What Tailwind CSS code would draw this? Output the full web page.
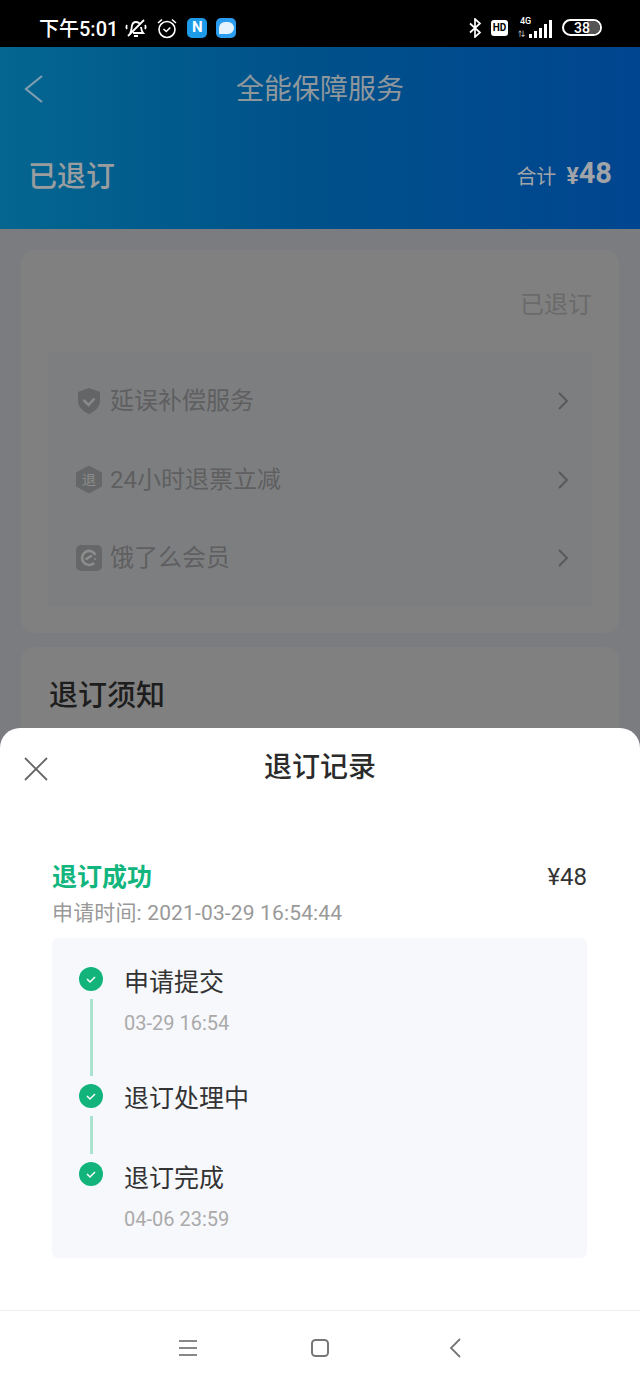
<!DOCTYPE html>
<html lang="zh-CN">
<head>
  <meta charset="UTF-8" />
  <title>全能保障服务</title>
  <script src="https://cdn.jsdelivr.net/npm/@tailwindcss/browser@4"></script>
</head>
<body class="bg-white font-['Roboto','Noto_Sans_CJK_SC',sans-serif]">
  <div class="w-[640px] h-[1387px] flex flex-col overflow-hidden">

    <!-- Status bar -->
    <div class="h-[47px] shrink-0 bg-black text-white flex items-center pl-[39px] pr-[38px] pt-[15px] pb-[7px]">
      <span class="text-[20px] leading-none mt-[2px] font-medium">下午5:01</span>
      <svg class="w-[22px] h-[22px] ml-[7px]" viewBox="0 0 22 22" fill="none" stroke="#fff" stroke-width="1.800">
        <path d="M5 16c1.500-2 1.500-4 1.800-6.500C7.200 6.500 9 5 11 5s3.500 1 4.200 3M16 10c.3 2.500.5 4.500 2 6H8M9 19h4M19 3 3 19M2 8c-.6 1-.6 3 0 4M20 8c.6 1 .6 3 0 4" />
      </svg>
      <svg class="w-[22px] h-[22px] ml-[9px]" viewBox="0 0 22 22" fill="none" stroke="#fff" stroke-width="1.600">
        <circle cx="11" cy="12.500" r="8" />
        <path d="M7.500 12l2.800 2.500 4-4M2 6l4-3.500M20 6l-4-3.500" />
      </svg>
      <div class="w-[20px] h-[20px] ml-[9px] rounded-[5px] bg-[#1d9be8] flex items-center justify-center text-[15px] font-bold leading-none">N</div>
      <div class="w-[20px] h-[20px] ml-[9px] rounded-[5px] bg-[#2a9df0] flex items-center justify-center">
        <div class="w-[15px] h-[12px] bg-[#e4f3fd] rounded-[7px_7px_7px_1px]"></div>
      </div>
      <div class="ml-auto flex items-center">
        <svg class="w-[14px] h-[20px]" viewBox="0 0 14 20" fill="none" stroke="#fff" stroke-width="1.700">
          <path d="M2 5.500l10 9-5 4.500V1l5 4.500-10 9" />
        </svg>
        <div class="w-[17px] h-[16px] ml-[9px] rounded-[3px] bg-white text-black text-[10px] font-bold leading-[16px] text-center">HD</div>
        <div class="w-[34px] h-[20px] ml-[10px] relative">
          <span class="absolute left-[2px] top-[-2px] text-[9px] font-medium leading-[10px]">4G</span>
          <span class="absolute left-0 bottom-0 text-[7px] leading-[8px]">⇅</span>
          <div class="absolute right-0 bottom-0 flex items-end gap-[2px]">
            <div class="w-[3px] h-[4px] bg-white"></div>
            <div class="w-[3px] h-[7px] bg-white"></div>
            <div class="w-[3px] h-[10px] bg-white"></div>
            <div class="w-[3px] h-[14px] bg-white"></div>
            <div class="w-[3px] h-[18px] bg-white"></div>
          </div>
        </div>
        <div class="w-[40px] h-[17px] ml-[10px] rounded-full border-2 border-white relative overflow-hidden flex items-center justify-center">
          <div class="absolute right-0 top-0 bottom-0 w-[13px] bg-[#555]"></div>
          <span class="relative text-[14px] font-medium leading-none">38</span>
        </div>
      </div>
    </div>

    <!-- Dimmed header -->
    <div class="h-[182px] shrink-0 bg-gradient-to-r from-[#056690] via-[#00508a] to-[#004590] text-[#8f979c]">
      <div class="h-[82px] flex items-center relative">
        <svg class="ml-[24px] mt-[1px] w-[20px] h-[30px]" viewBox="0 0 20 30" fill="none" stroke="#7d9db0" stroke-width="2.200">
          <path d="M18 2 2 15l16 13" />
        </svg>
        <div class="absolute inset-x-0 text-center text-[28px] leading-none mt-[4px]">全能保障服务</div>
      </div>
      <div class="h-[96px] flex items-center justify-between pl-[28px] pr-[28px]">
        <span class="text-[29px] font-medium leading-none text-[#9a9d9f]">已退订</span>
        <div class="flex items-center text-[#a0a4a8]">
          <span class="text-[20px] leading-none">合计</span>
          <span class="text-[23px] font-bold leading-none ml-[10px] -mt-[1px]">¥</span>
          <span class="text-[29px] font-bold leading-none -mt-[7px]">48</span>
        </div>
      </div>
    </div>

    <!-- Dimmed page under the sheet -->
    <div class="h-[519px] shrink-0 bg-[#7b7c80] px-[21px] pt-[21px] overflow-hidden">
      <div class="h-[383px] rounded-[14px] bg-[#808080] px-[27px] pt-[38px]">
        <div class="text-right text-[24px] leading-[34px] text-[#6a6a6a]">已退订</div>
        <div class="mt-[30px] h-[254px] bg-[#7d7e80] pl-[28px] pr-[23px] pt-[10px] text-[#5f5f60]">
          <div class="h-[78px] flex items-center">
            <svg class="w-[26px] h-[28px]" viewBox="0 0 26 28">
              <path d="M13 1l11 4v9c0 6-5 10.500-11 13C7 24.500 2 20 2 14V5z" fill="#646566" />
              <path d="M7.500 13l5 5 6-6.500" fill="none" stroke="#8a8a8a" stroke-width="2.500" />
            </svg>
            <span class="ml-[8px] text-[24px] leading-none">延误补偿服务</span>
            <svg class="ml-auto w-[12px] h-[20px]" viewBox="0 0 12 20" fill="none" stroke="#58595a" stroke-width="2"><path d="M2 2l8 8-8 8" /></svg>
          </div>
          <div class="h-[79px] flex items-center">
            <div class="w-[26px] h-[28px] bg-[#666768] [clip-path:polygon(50%_0,100%_25%,100%_75%,50%_100%,0_75%,0_25%)] flex items-center justify-center text-[14px] leading-none text-[#8d8d8d]">退</div>
            <span class="ml-[8px] text-[24px] leading-none">24小时退票立减</span>
            <svg class="ml-auto w-[12px] h-[20px]" viewBox="0 0 12 20" fill="none" stroke="#58595a" stroke-width="2"><path d="M2 2l8 8-8 8" /></svg>
          </div>
          <div class="h-[78px] flex items-center">
            <div class="w-[26px] h-[26px] rounded-[5px] bg-[#666768] flex items-center justify-center">
              <svg class="w-[18px] h-[18px]" viewBox="0 0 18 18" fill="none" stroke="#8d8d8d" stroke-width="2.600">
                <path d="M15.500 6A7 7 0 1 0 14 14M5.500 10.500 12 6.500" />
                <circle cx="15" cy="10" r="1" fill="#8d8d8d" stroke="none" />
              </svg>
            </div>
            <span class="ml-[8px] text-[24px] leading-none">饿了么会员</span>
            <svg class="ml-auto w-[12px] h-[20px]" viewBox="0 0 12 20" fill="none" stroke="#58595a" stroke-width="2"><path d="M2 2l8 8-8 8" /></svg>
          </div>
        </div>
      </div>
      <div class="mt-[14px] h-[120px] rounded-[14px] bg-[#808080] pl-[28px] pt-[32px] text-[29px] font-medium leading-[34px] text-[#1d1d1d]">退订须知</div>
    </div>

    <!-- Bottom sheet -->
    <div class="flex-1 -mt-[20px] bg-white rounded-t-[20px] flex flex-col relative">
      <div class="h-[79px] flex items-center relative">
        <svg class="absolute left-[24px] top-[29px] w-[24px] h-[24px]" viewBox="0 0 24 24" fill="none" stroke="#666" stroke-width="1.800">
          <path d="M1 1l22 22M23 1 1 23" />
        </svg>
        <div class="w-full text-center text-[28px] font-medium leading-none text-[#2b2b2b] mt-[1px]">退订记录</div>
      </div>
      <div class="pl-[52px] pr-[53px] pt-[51px] flex-1">
        <div class="flex items-center justify-between h-[38px]">
          <span class="text-[25px] font-bold leading-none text-[#11b57e]">退订成功</span>
          <span class="text-[24px] leading-none text-[#333]">¥48</span>
        </div>
        <div class="mt-[2px] text-[21px] tracking-[0.15px] leading-[30px] text-[#999]">申请时间: 2021-03-29 16:54:44</div>
        <div class="mt-[10px] h-[320px] rounded-[6px] bg-[#f7f8fc] pl-[27px] pt-[29px]">
          <div class="flex gap-[21px]">
            <div class="w-[24px] pb-[8px] flex flex-col items-center">
              <svg class="w-[24px] h-[24px] shrink-0" viewBox="0 0 24 24"><circle cx="12" cy="12" r="12" fill="#12b47c" /><path d="M8 12l3 3 5-5" fill="none" stroke="#fff" stroke-width="1.500" /></svg>
              <div class="w-[3px] h-[77px] mt-[8px] bg-[#a9e3d0]"></div>
            </div>
            <div>
              <div class="text-[25px] leading-[34px] text-[#333] -mt-[1px]">申请提交</div>
              <div class="mt-[11px] text-[20px] leading-[24px] text-[#aaa]">03-29 16:54</div>
            </div>
          </div>
          <div class="flex gap-[21px]">
            <div class="w-[24px] pb-[8px] flex flex-col items-center">
              <svg class="w-[24px] h-[24px] shrink-0" viewBox="0 0 24 24"><circle cx="12" cy="12" r="12" fill="#12b47c" /><path d="M8 12l3 3 5-5" fill="none" stroke="#fff" stroke-width="1.500" /></svg>
              <div class="w-[3px] h-[38px] mt-[8px] bg-[#a9e3d0]"></div>
            </div>
            <div class="text-[25px] leading-[34px] text-[#333] -mt-[2px]">退订处理中</div>
          </div>
          <div class="flex gap-[21px]">
            <svg class="w-[24px] h-[24px] shrink-0" viewBox="0 0 24 24"><circle cx="12" cy="12" r="12" fill="#12b47c" /><path d="M8 12l3 3 5-5" fill="none" stroke="#fff" stroke-width="1.500" /></svg>
            <div>
              <div class="text-[25px] leading-[34px] text-[#333]">退订完成</div>
              <div class="mt-[11px] text-[20px] leading-[24px] text-[#aaa]">04-06 23:59</div>
            </div>
          </div>
        </div>
      </div>
      <!-- Nav bar -->
      <div class="h-[77px] shrink-0 border-t border-[#eeeeee] pl-[178px] flex items-center">
        <svg class="w-[20px] h-[18px] -mt-[2px]" viewBox="0 0 20 18" fill="none" stroke="#888" stroke-width="1.800"><path d="M1 2h18M1 9h18M1 16h18" /></svg>
        <svg class="w-[20px] h-[20px] ml-[112px] -mt-[2px]" viewBox="0 0 20 20" fill="none" stroke="#777" stroke-width="2"><rect x="2" y="2" width="16" height="16" rx="3.500" /></svg>
        <svg class="w-[12px] h-[20px] ml-[119px] -mt-[2px]" viewBox="0 0 12 20" fill="none" stroke="#777" stroke-width="1.800"><path d="M11 1 2 10l9 9" /></svg>
      </div>
    </div>
  </div>
</body>
</html>
